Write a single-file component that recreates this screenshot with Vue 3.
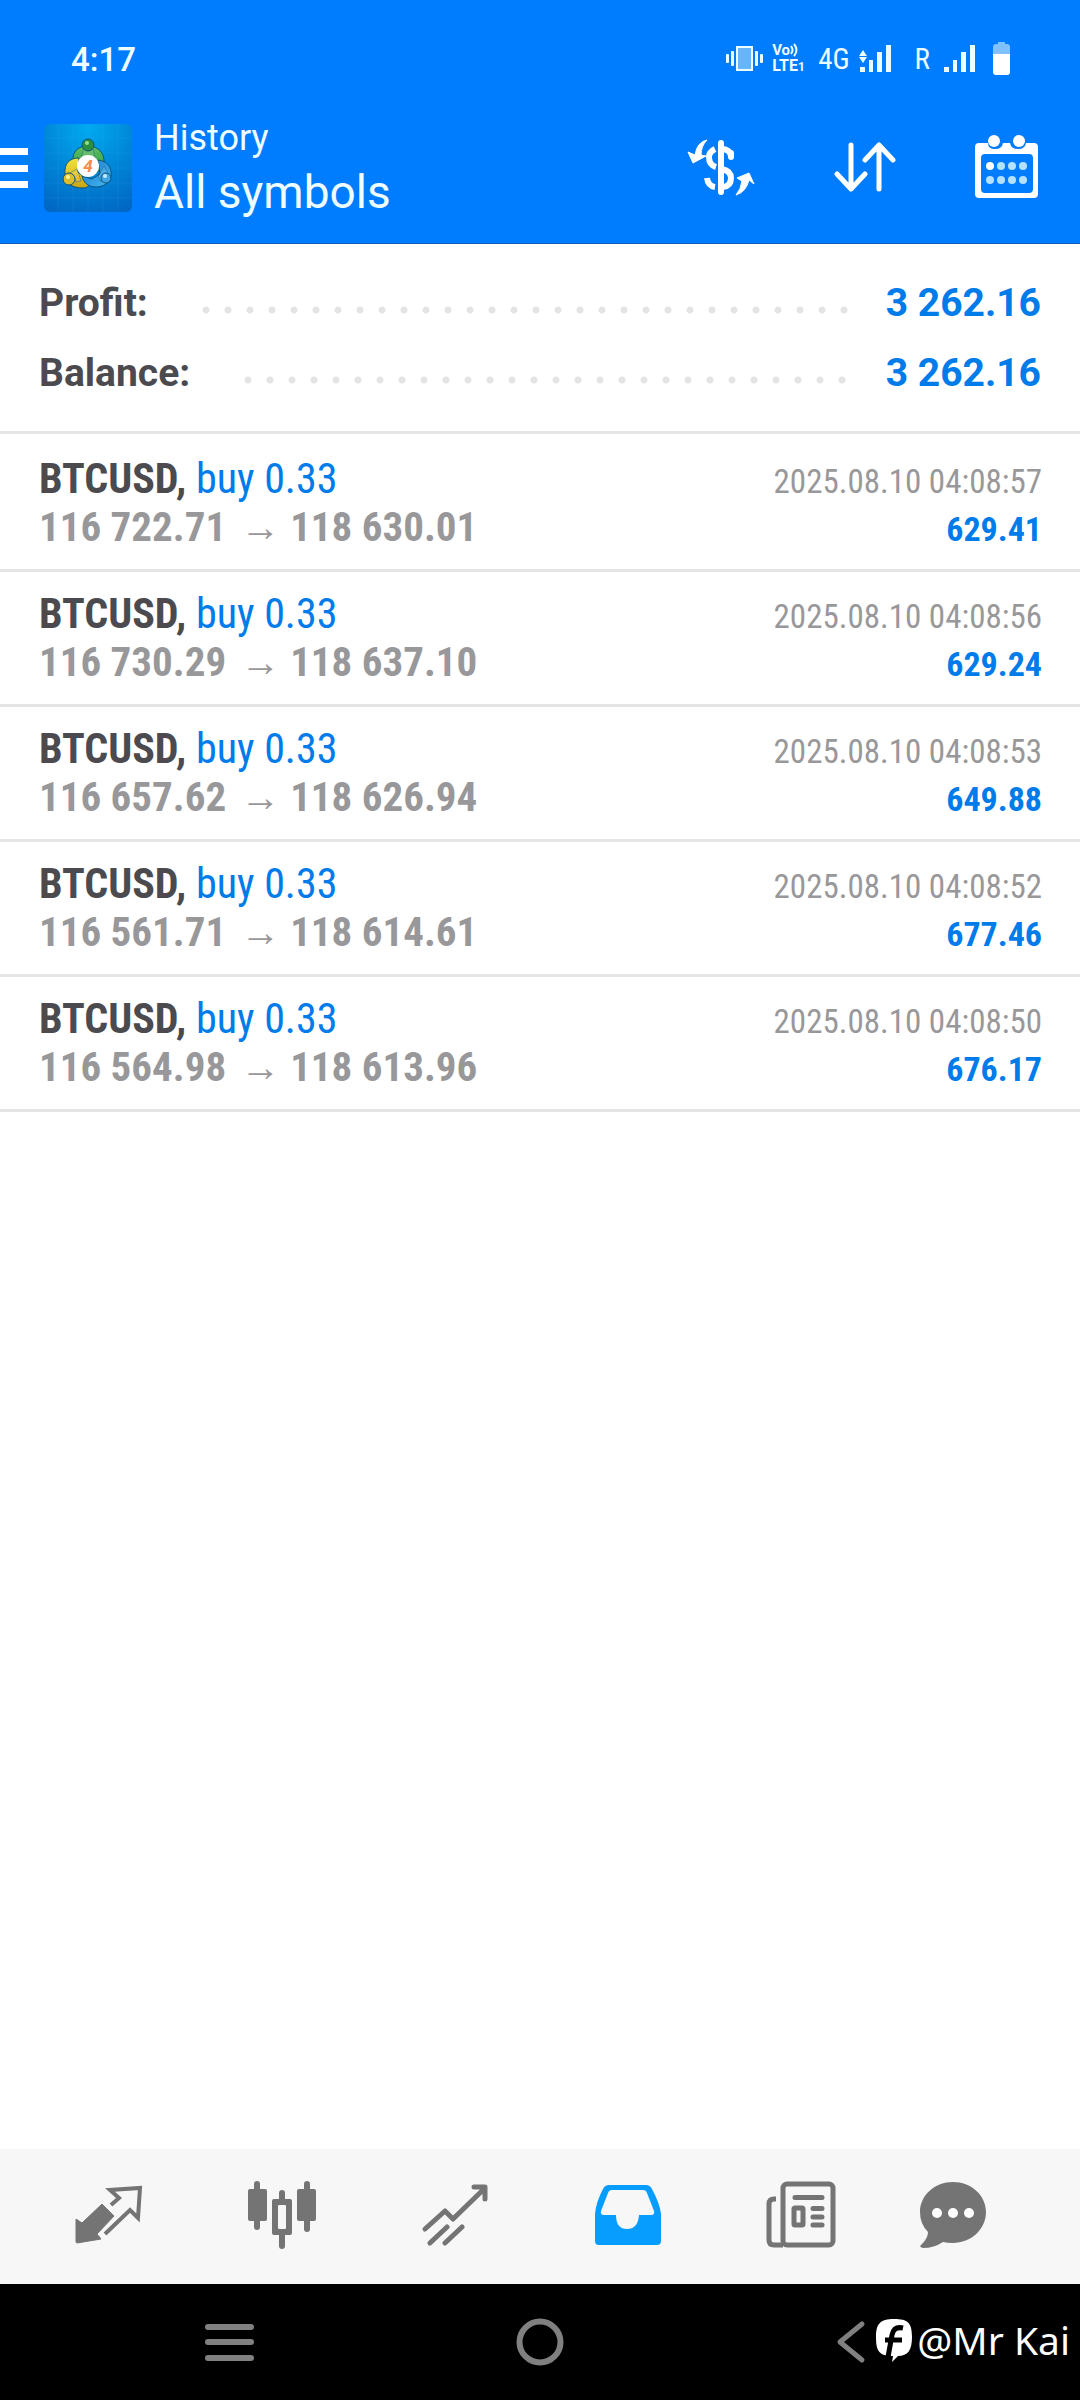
<script setup>
const summary = [
  { label: 'Profit:', value: '3 262.16' },
  { label: 'Balance:', value: '3 262.16' },
]
const deals = [
  { open: '116 722.71', close: '118 630.01', time: '2025.08.10 04:08:57', profit: '629.41' },
  { open: '116 730.29', close: '118 637.10', time: '2025.08.10 04:08:56', profit: '629.24' },
  { open: '116 657.62', close: '118 626.94', time: '2025.08.10 04:08:53', profit: '649.88' },
  { open: '116 561.71', close: '118 614.61', time: '2025.08.10 04:08:52', profit: '677.46' },
  { open: '116 564.98', close: '118 613.96', time: '2025.08.10 04:08:50', profit: '676.17' },
]
</script>

<template>
  <div class="screen">
    <header class="top">
      <div class="status">
        <time class="clock">4:17</time>
        <div class="indicators">
          <svg width="38" height="34" viewBox="726 42 38 34" fill="#eaffff">
            <rect x="727" y="54" width="3" height="9" rx="1" /><rect x="732" y="51" width="3" height="15" rx="1" />
            <rect x="756" y="51" width="3" height="15" rx="1" /><rect x="761" y="54" width="3" height="9" rx="1" />
            <rect x="738" y="47" width="15" height="23" fill="#66b5ff" stroke="#eaffff" stroke-width="2" />
          </svg>
          <span class="volte">
            <span class="vo">Vo<svg width="9" height="14" viewBox="0 0 9 14" fill="none" stroke="#eaffff" stroke-width="2"><path d="M1 3q3 4 0 8M4 1q5 6 0 12" /></svg></span>
            <span class="lte">LTE<small>1</small></span>
          </span>
          <span class="net">4G</span>
          <svg class="sig1" width="32" height="34" viewBox="858 42 32 34" fill="#eaffff">
            <path d="M858 56l4-6 4 6zM858 57h8l-4 6zM859 67h5v5h-5zM868 60h4v12h-4zM876 52h5v20h-5zM885 45h5v27h-5z" />
          </svg>
          <span class="net roam">R</span>
          <svg class="sig2" width="31" height="34" viewBox="944 42 31 34" fill="#eaffff">
            <path d="M944 67h5v5h-5zM953 60h4v12h-4zM961 52h5v20h-5zM970 45h5v27h-5z" />
          </svg>
          <svg class="batt" width="17" height="34" viewBox="993 42 17 34">
            <path d="M993 54v-7q0-3 3-3h2v-2h7v2h2q3 0 3 3v7z" fill="#7fc0ff" /><path d="M993 54h17v18q0 3-3 3h-11q-3 0-3-3z" fill="#fff" />
          </svg>
        </div>
      </div>

      <div class="toolbar">
        <button class="icon-btn" aria-label="Open menu">
          <svg width="28" height="41" viewBox="0 0 28 41" fill="#fff"><path d="M0 0h28v7H0zM0 17h28v7H0zM0 33h28v7H0z" /></svg>
        </button>
        <svg class="logo" width="88" height="88" viewBox="0 0 88 88">
          <defs>
            <radialGradient id="bg" cx=".5" cy=".05" r="1"><stop offset="0" stop-color="#00aaf0" /><stop offset=".5" stop-color="#0087d8" /><stop offset="1" stop-color="#0068c4" /></radialGradient>
            <linearGradient id="gr" x1="0" y1="0" x2="0" y2="1"><stop offset="0" stop-color="#62bf62" /><stop offset="1" stop-color="#2a9a45" /></linearGradient>
            <linearGradient id="ye" x1="0" y1="0" x2="0" y2="1"><stop offset="0" stop-color="#f2e53a" /><stop offset="1" stop-color="#c9a512" /></linearGradient>
            <linearGradient id="bl" x1="0" y1="0" x2="1" y2="1"><stop offset="0" stop-color="#1577cc" /><stop offset="1" stop-color="#48baf2" /></linearGradient>
          </defs>
          <rect width="88" height="88" rx="6" fill="url(#bg)" />
          <path d="M14 0v88M29 0v88M44 0v88M59 0v88M74 0v88M0 14h88M0 29h88M0 44h88M0 59h88M0 74h88" stroke="#48b9ff" stroke-opacity=".12" />
          <g stroke="#0d5578">
            <path d="M29 37C28 27 35 22 44 22s17 6 16 17c0 5-3 8-7 9l-4-14H40l-6 4z" fill="url(#gr)" />
            <path d="M35 34C25 34 20 40 21 50c0 10 8 14 18 14 4 0 6-2 7-5L34 48z" fill="url(#ye)" />
            <path d="M54 36c10 1 14 8 13 16-1 7-8 11-15 11-8 0-13-5-14-11l10 3 8-5z" fill="url(#bl)" />
            <path d="M40 24q4 5 9 1l2 9H37zM24 50q7 1 8 8l5-1-4-12zM57 58q1-7 8-7l-5-9-6 10z" fill="#fff" fill-opacity=".12" stroke-opacity=".4" />
            <circle cx="44" cy="21" r="6" fill="#2b8f3e" /><circle cx="25" cy="55" r="6" fill="#d9bd2c" /><circle cx="62" cy="54" r="5" fill="#3fa5e4" />
          </g>
          <circle cx="43" cy="19" r="2" fill="#98dd91" /><circle cx="24" cy="53" r="2" fill="#fff39a" /><circle cx="61" cy="52" r="2" fill="#c0ecff" />
          <circle cx="44" cy="42" r="11" fill="#fff" />
          <text x="44" y="48" text-anchor="middle" font-size="17" font-style="italic" font-weight="700" fill="#f58a4b">4</text>
        </svg>
        <div class="titles">
          <span class="sub">History</span>
          <h1>All symbols</h1>
        </div>
        <div class="actions">
          <button class="icon-btn" aria-label="Deals">
            <svg width="68" height="64" viewBox="688 134 68 64" fill="none" stroke="#fff">
              <path d="M722 142v49" stroke-width="6" stroke-linecap="round" />
              <path d="M732 155q-1-7-10-7M716 148q-6 3-6 8 0 8 7 10M723 168q9 2 9 9 0 8-8 9M708 177q1 8 8 9" stroke-width="6" />
              <path d="M732 152v4" stroke-width="6" stroke-linecap="round" />
              <path d="M708 139q-10 2-12 15l-7-3 5 11 13-7-5-1q0-9 6-15z" fill="#fff" stroke-width="1" stroke-linejoin="round" />
              <path d="M737 194q10-3 13-15l5 4-5-11-12 5 5 3q-1 8-6 14z" fill="#fff" stroke-width="1" stroke-linejoin="round" />
            </svg>
          </button>
          <button class="icon-btn" aria-label="Sort">
            <svg width="62" height="52" viewBox="834 141 62 52" fill="none" stroke="#fff" stroke-width="5" stroke-linecap="round" stroke-linejoin="round">
              <path d="M851 145v44M837 174l14 15 14-15M879 189v-44M865 160l14-15 14 15" />
            </svg>
          </button>
          <button class="icon-btn" aria-label="Choose period">
            <svg width="64" height="64" viewBox="975 134 64 64" fill="#fff">
              <path fill-rule="evenodd" d="M979 142h9q0 6 7 6 7 0 8-6h7q1 6 8 6t8-6h8q4 0 4 4v47q0 4-4 4h-55q-4 0-4-4v-47q0-4 4-4zM985 153q-4 0-4 4v31q0 4 4 4h44q4 0 4-4v-31q0-4-4-4z" />
              <circle cx="994" cy="140" r="6" /><circle cx="1019" cy="140" r="6" /><circle cx="990" cy="165" r="4" />
              <g fill="#b5e2ff"><circle cx="1001" cy="165" r="4" /><circle cx="1012" cy="165" r="4" /><circle cx="1023" cy="165" r="4" /><circle cx="990" cy="179" r="4" /><circle cx="1001" cy="179" r="4" /><circle cx="1012" cy="179" r="4" /><circle cx="1023" cy="179" r="4" /></g>
            </svg>
          </button>
        </div>
      </div>
    </header>

    <main class="content">
      <dl class="summary">
        <div v-for="s in summary" :key="s.label" class="sum-row">
          <dt>{{ s.label }}</dt>
          <span class="dots"></span>
          <dd>{{ s.value }}</dd>
        </div>
      </dl>
      <ul class="deals">
        <li v-for="d in deals" :key="d.time" class="deal">
          <div class="line">
            <span class="symbol">BTCUSD, <span class="side">buy 0.33</span></span>
            <time class="date">{{ d.time }}</time>
          </div>
          <div class="line">
            <span class="prices">{{ d.open }}<span class="arrow">→</span>{{ d.close }}</span>
            <span class="gain">{{ d.profit }}</span>
          </div>
        </li>
      </ul>
    </main>

    <nav class="tabs">
      <button aria-label="Quotes">
        <svg width="68" height="60" viewBox="75 2186 68 60">
          <path d="M76 2220l6 4 20-19 12 12-17 18 4 5-24 4q-1 0-1-2z" fill="#747474" stroke="#747474" stroke-width="1" stroke-linejoin="round" />
          <path d="M111 2206l8-7-9-8 30-2-2 30-8-8-25 24" fill="none" stroke="#747474" stroke-width="4" />
        </svg>
      </button>
      <button aria-label="Charts">
        <svg width="70" height="70" viewBox="246 2181 70 70" fill="#747474">
          <rect x="247" y="2190" width="19" height="32" rx="2" /><rect x="253" y="2182" width="6" height="49" rx="3" />
          <rect x="296" y="2190" width="19" height="32" rx="2" /><rect x="303" y="2182" width="6" height="51" rx="3" />
          <rect x="278" y="2191" width="6" height="59" rx="3" /><rect x="271" y="2200" width="20" height="36" rx="2" /><rect x="277" y="2206" width="8" height="24" rx="1" fill="#f7f7f7" />
        </svg>
      </button>
      <button aria-label="Trade">
        <svg width="68" height="62" viewBox="420 2184 68 62" fill="none" stroke="#747474" stroke-width="5" stroke-linejoin="round">
          <path d="M424 2229l20-18 8 8 32-31M473 2187h11v12" stroke-linecap="round" /><path d="M429 2243l17-16M444 2243l17-16" stroke-linecap="round" />
        </svg>
      </button>
      <button aria-label="History" aria-current="page">
        <svg width="68" height="62" viewBox="594 2184 68 62">
          <path fill="#069dff" fill-rule="evenodd" d="M609 2185h37q4 0 6 4 8 15 9 25v27q0 4-4 4h-58q-4 0-4-4v-27q1-12 8-25 2-4 6-4zM612 2190q-3 0-4 3l-7 18q-1 4 3 4h12q0 14 11 14t12-14h12q4 0 3-4l-7-18q-1-3-4-3z" />
        </svg>
      </button>
      <button aria-label="News">
        <svg width="70" height="68" viewBox="766 2181 70 68" fill="none" stroke="#747474" stroke-width="5">
          <rect x="783" y="2184" width="50" height="61" rx="4" /><path d="M776 2199h-2q-5 0-5 5v36q0 5 5 5h9" />
          <path d="M795 2197.500h27M813 2208.500h9M813 2217h9M813 2225h9" stroke-linecap="round" /><rect x="794" y="2208" width="9" height="17" rx="1" />
        </svg>
      </button>
      <button aria-label="Messages">
        <svg width="68" height="68" viewBox="919 2181 68 68">
          <path fill="#747474" d="M953 2182c18 0 33 13 33 30s-15 31-33 31q-6 0-10-1-9 6-20 6-5-1-1-4 6-6 6-12-8-8-8-20c0-17 15-30 33-30z" />
          <g fill="#fff"><circle cx="937" cy="2213" r="5" /><circle cx="953" cy="2213" r="5" /><circle cx="969" cy="2213" r="5" /></g>
        </svg>
      </button>
    </nav>

    <nav class="system">
      <button aria-label="Recent apps"><svg width="50" height="40" viewBox="0 0 50 40" stroke="#808080" stroke-width="6" stroke-linecap="round"><path d="M4 5h43M4 20h43M4 36h43" /></svg></button>
      <button aria-label="Home"><svg width="48" height="48" viewBox="0 0 48 48" fill="none" stroke="#808080" stroke-width="6"><circle cx="24" cy="24" r="20.500" /></svg></button>
      <button aria-label="Back"><svg width="30" height="44" viewBox="0 0 30 44" fill="none" stroke="#808080" stroke-width="5" stroke-linecap="round" stroke-linejoin="round"><path d="M26 4L4 22l22 18" /></svg></button>
      <div class="watermark">
        <svg width="38" height="44" viewBox="875 2321 38 44">
          <path fill="#fff" d="M894 2322c14 0 18 4 18 18 0 13-4 19-14 19l-6 6 1-6c-14 0-17-5-17-19 0-13 4-18 18-18z" />
          <path d="M903 2331q-9-2-11 7l-4 22M885 2343h17" fill="none" stroke="#000" stroke-width="5" />
        </svg>
        <span>@Mr Kai</span>
      </div>
    </nav>
  </div>
</template>

<style>
body { margin: 0; background: #fff; }
</style>

<style scoped>
.screen { min-height: 100vh; display: flex; flex-direction: column; background: #fff; font-family: Roboto, "Liberation Sans", sans-serif; }
button { border: 0; padding: 0; background: none; display: flex; align-items: center; justify-content: center; }
svg { display: block; flex: none; }
.top { background: #007cff; color: #eefdff; border-bottom: 1px solid #0a5cb8; }
.status { display: flex; justify-content: space-between; align-items: center; height: 118px; padding: 0 70px 0 71px; }
.clock { font-size: 33px; font-weight: 500; }
.indicators { display: flex; align-items: center; }
.volte { margin-left: 9px; width: 36px; display: flex; flex-direction: column; font-weight: 700; font-size: 16px; line-height: 16px; }
.vo { display: flex; font-size: 15px; line-height: 15px; }
.lte small { font-size: 12px; }
.net { font-family: "Roboto Condensed", Roboto, sans-serif; font-size: 29px; margin-left: 10px; }
.roam { margin-left: 24px; }
.sig1 { margin-left: 9px; }
.sig2 { margin-left: 14px; }
.batt { margin-left: 18px; }
.toolbar { display: flex; align-items: center; height: 100px; padding: 0 41px 25px 0; }
.logo { margin-left: 16px; }
.titles { flex: 1; margin-left: 22px; }
.sub { display: block; font-size: 36px; line-height: 48px; }
h1 { margin: 0; font-size: 46px; line-height: 60px; font-weight: 400; }
.actions { display: flex; align-items: center; gap: 79px; padding-bottom: 2px; }
.content { flex: 1; }
.summary { margin: 0; padding: 24px 39px 23px; border-bottom: 3px solid #e5e5e5; }
.sum-row { display: flex; align-items: center; height: 70px; font-size: 39px; font-weight: 700; color: #4b4b4f; }
.dots { flex: 1; height: 8px; margin: 14px 36px 0 47px; background: radial-gradient(circle, #e4e4e4 3px, transparent 4px) 0 0 / 22px 8px repeat-x; }
dd { margin: 0; color: #007bea; }
.deals { list-style: none; margin: 0; padding: 3px 0 0; font-family: "Roboto Condensed", Roboto, sans-serif; }
.deal { padding: 18px 38px 18px 39px; border-bottom: 3px solid #e5e5e5; }
.line { display: flex; justify-content: space-between; align-items: baseline; height: 48px; line-height: 48px; }
.symbol, .prices { font-size: 42px; font-weight: 700; color: #4b4b4f; white-space: pre; }
.side { font-weight: 400; color: #007bea; }
.prices { font-size: 41px; color: #98989b; }
.arrow { font-family: "Liberation Sans", sans-serif; font-size: 40px; line-height: 40px; font-weight: 400; margin: 0 10px 0 14px; }
.date { font-size: 33px; color: #98989b; }
.gain { font-size: 34px; font-weight: 700; color: #007bea; }
.tabs { display: grid; grid-template-columns: repeat(5, 173fr) 132fr; height: 135px; padding: 0 61px 4px 22px; box-sizing: border-box; background: #f7f7f7; }
.system { position: relative; display: grid; grid-template-columns: repeat(3, 1fr); height: 116px; padding: 0 74px 0 73px; background: #000; }
.watermark { position: absolute; right: 10px; top: 30px; display: flex; align-items: center; gap: 4px; color: #fff; font-family: "Noto Sans", sans-serif; font-size: 39px; line-height: 52px; }
</style>
